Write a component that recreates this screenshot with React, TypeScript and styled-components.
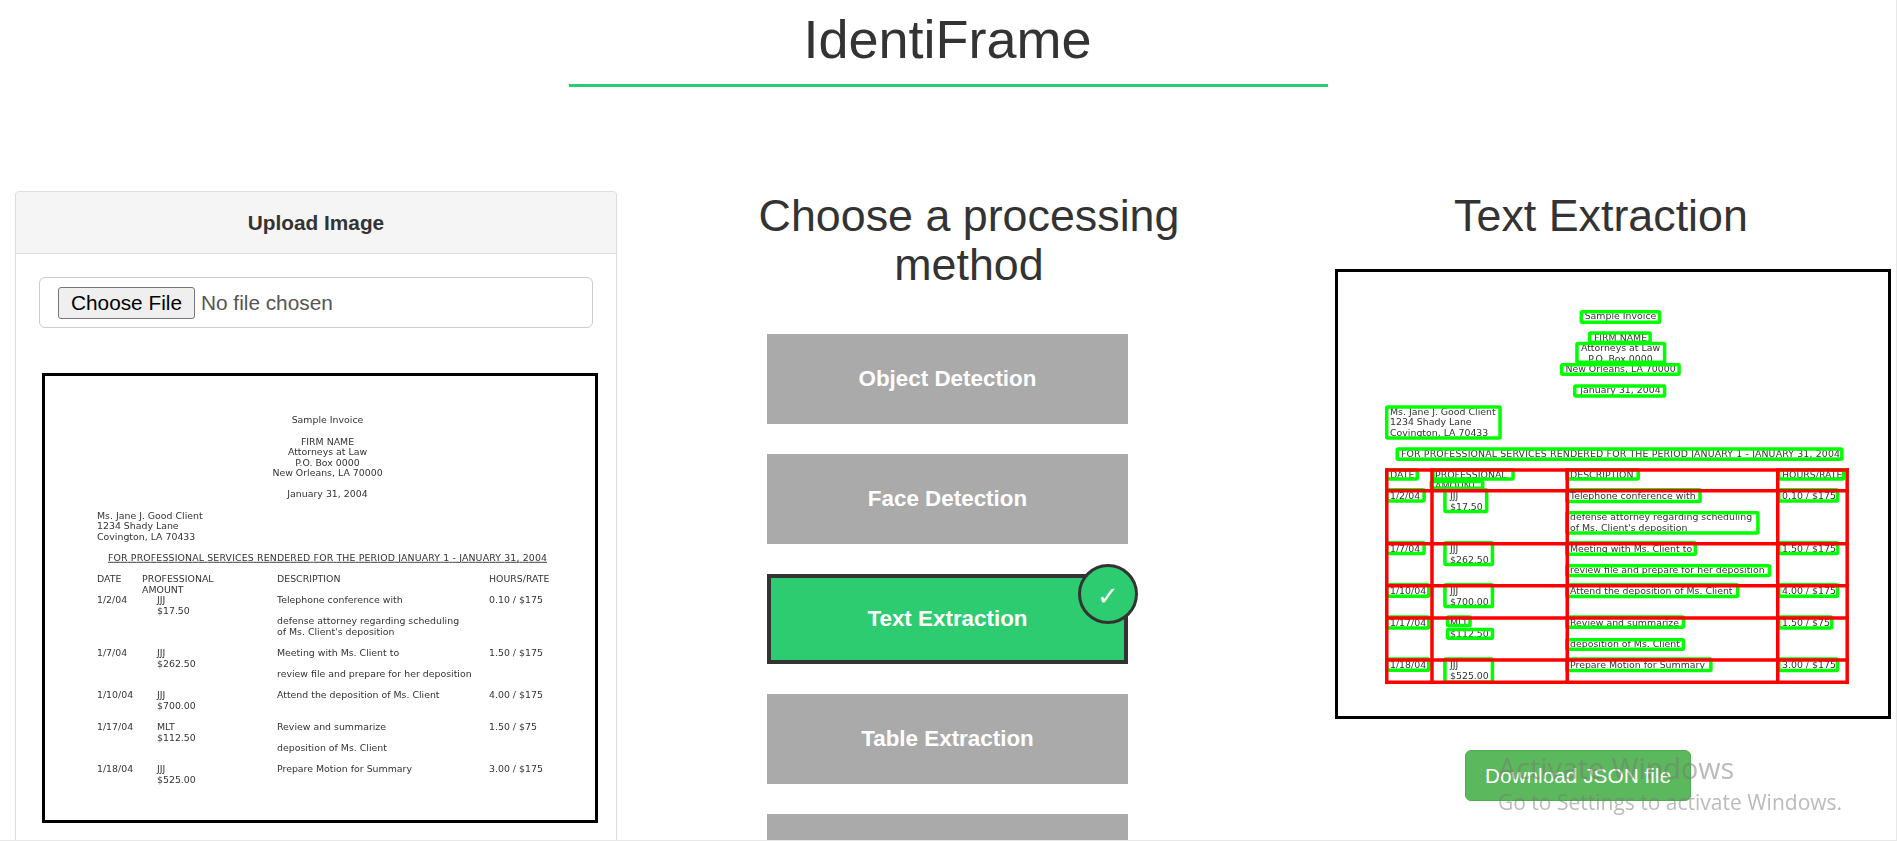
import styled, { createGlobalStyle } from 'styled-components';

const GlobalStyle = createGlobalStyle`
  html, body {
    margin: 0;
    padding: 0;
    background: #fff;
    overflow: hidden;
    font-family: "Liberation Sans", Arial, sans-serif;
    color: #333;
  }
`;

const Header = styled.header`
  padding-top: 8px;
  text-align: center;
`;

const Title = styled.h1`
  margin: 0;
  padding-right: 2px;
  font-size: 54px;
  line-height: 62px;
  font-weight: 400;
`;

const TitleRule = styled.div`
  width: 759px;
  height: 3px;
  margin: 14px auto 0;
  background: #2ecc71;
`;

const Columns = styled.main`
  display: grid;
  grid-template-columns: 632px 703px 1fr;
  margin-top: 104px;
`;

const LeftColumn = styled.section`
  padding: 0 15px;
`;

const Panel = styled.div`
  border: 1px solid #ddd;
  border-radius: 4px;
  background: #fff;
`;

const PanelHeading = styled.div`
  height: 61px;
  display: flex;
  align-items: center;
  justify-content: center;
  background: #f5f5f5;
  border-bottom: 1px solid #ddd;
  border-radius: 3px 3px 0 0;
  font-size: 20.8px;
  font-weight: 700;
`;

const PanelBody = styled.div`
  padding: 23px 18px 20px 23px;
`;

const FileField = styled.input`
  display: block;
  box-sizing: border-box;
  width: 554px;
  height: 51px;
  padding: 9px 18px;
  border: 1px solid #ccc;
  border-radius: 6px;
  background: #fff;
  font-family: "Liberation Sans", Arial, sans-serif;
  font-size: 20.8px;
  color: #555;

  &::file-selector-button {
    box-sizing: border-box;
    width: 137px;
    height: 32px;
    margin-right: 6px;
    padding: 0;
    border: 1px solid #767676;
    border-radius: 3px;
    background: #efefef;
    color: #000;
    font: inherit;
  }
`;

const Sheet = styled.div`
  box-sizing: border-box;
  width: 556px;
  height: 450px;
  border: 3px solid #000;
  background: #fff;
  overflow: hidden;
`;

const UploadSheet = styled(Sheet)`
  margin: 45px 0 0 3px;
`;

const MiddleColumn = styled.section`
  display: flex;
  flex-direction: column;
`;

const ColumnTitle = styled.h2`
  margin: 0;
  font-size: 44.8px;
  line-height: 49px;
  font-weight: 400;
  text-align: center;
`;

const MethodTitle = styled(ColumnTitle)`
  width: 500px;
  margin-left: 87px;
`;

const MethodList = styled.div`
  display: flex;
  flex-direction: column;
  gap: 30px;
  width: 361px;
  margin: 45px 0 0 135px;
`;

const MethodButton = styled.button<{ $active?: boolean }>`
  position: relative;
  flex: none;
  box-sizing: border-box;
  width: 100%;
  height: 90px;
  padding: 0;
  border: ${(p) => (p.$active ? '4px solid #333' : 'none')};
  background: ${(p) => (p.$active ? '#2ecc71' : '#aaa')};
  color: #fff;
  font-family: "Liberation Sans", Arial, sans-serif;
  font-size: 22.4px;
  font-weight: 700;
`;

const CheckBadge = styled.span`
  position: absolute;
  top: -14px;
  right: -14px;
  box-sizing: border-box;
  width: 60px;
  height: 60px;
  padding-top: 3px;
  display: flex;
  align-items: center;
  justify-content: center;
  border: 3px solid #333;
  border-radius: 50%;
  background: #2ecc71;
  font-family: "DejaVu Sans", sans-serif;
  font-size: 26px;
  font-weight: 400;
`;

const RightColumn = styled.section`
  display: flex;
  flex-direction: column;
  align-items: flex-start;
`;

const ResultTitle = styled(ColumnTitle)`
  width: 532px;
  padding-bottom: 29px;
`;

const DownloadButton = styled.button`
  width: 226px;
  height: 51px;
  margin: 31px 0 0 130px;
  border: 1px solid #4cae4c;
  border-radius: 6px;
  background: #5cb85c;
  color: #fff;
  font-family: "Liberation Sans", Arial, sans-serif;
  font-size: 20.8px;
`;

const Watermark = styled.div`
  position: fixed;
  left: 1498px;
  top: 750px;
  font-family: "Open Sans", "Noto Sans", sans-serif;
  color: rgba(120, 120, 120, 0.5);
  pointer-events: none;
`;

const WatermarkTitle = styled.div`
  font-size: 28.8px;
  line-height: 36px;
`;

const WatermarkText = styled.div`
  font-size: 21px;
  line-height: 32px;
`;

const PageEdge = styled.div`
  position: fixed;
  inset: 0;
  border-right: 1px solid #e8e8e8;
  border-bottom: 1px solid #e8e8e8;
  pointer-events: none;
`;

const DocText = styled.text`
  font-family: "DejaVu Sans", sans-serif;
  font-size: 9.4px;
  fill: #333;
`;

type Line = [number, number, string];

const ROW = (n: number) => 50.4 + 10.57 * n;
const CX = 285.5;

// columns of the scanned invoice, measured from the sheet edge
const C1 = 55;
const C2 = 100;
const C3 = 115;
const C4 = 235;
const C5 = 447;

const centered: [number, string][] = [
  [0, 'Sample Invoice'],
  [2, 'FIRM NAME'],
  [3, 'Attorneys at Law'],
  [4, 'P.O. Box 0000'],
  [5, 'New Orleans, LA 70000'],
  [7, 'January 31, 2004'],
];

const lines: Line[] = [
  [C1, 9, 'Ms. Jane J. Good Client'],
  [C1, 10, '1234 Shady Lane'],
  [C1, 11, 'Covington, LA 70433'],
  [C1, 15, 'DATE'],
  [C2, 15, 'PROFESSIONAL'],
  [C4, 15, 'DESCRIPTION'],
  [C5, 15, 'HOURS/RATE'],
  [C2, 16, 'AMOUNT'],
  [C1, 17, '1/2/04'],
  [C3, 17, 'JJJ'],
  [C4, 17, 'Telephone conference with'],
  [C5, 17, '0.10 / $175'],
  [C3, 18, '$17.50'],
  [C4, 19, 'defense attorney regarding scheduling'],
  [C4, 20, "of Ms. Client's deposition"],
  [C1, 22, '1/7/04'],
  [C3, 22, 'JJJ'],
  [C4, 22, 'Meeting with Ms. Client to'],
  [C5, 22, '1.50 / $175'],
  [C3, 23, '$262.50'],
  [C4, 24, 'review file and prepare for her deposition'],
  [C1, 26, '1/10/04'],
  [C3, 26, 'JJJ'],
  [C4, 26, 'Attend the deposition of Ms. Client'],
  [C5, 26, '4.00 / $175'],
  [C3, 27, '$700.00'],
  [C1, 29, '1/17/04'],
  [C3, 29, 'MLT'],
  [C4, 29, 'Review and summarize'],
  [C5, 29, '1.50 / $75'],
  [C3, 30, '$112.50'],
  [C4, 31, 'deposition of Ms. Client'],
  [C1, 33, '1/18/04'],
  [C3, 33, 'JJJ'],
  [C4, 33, 'Prepare Motion for Summary'],
  [C5, 33, '3.00 / $175'],
  [C3, 34, '$525.00'],
];

// detected boxes: x1, x2, y1, y2 in zoomed px of the reference
const top = (y: number) => y / 3 - 5;
const bottom = (y: number) => y / 3 + 195;
const gx = (x: number) => x / 2.765 - 5;

const boxes: [number, number, number, number][] = [
  [690, 916, top(138), top(180)],
  [713, 890, top(202), top(240)],
  [678, 930, top(233), top(300)],
  [636, 970, top(297), top(336)],
  [672, 930, top(361), top(401)],
  [152, 475, top(424), top(527)],
  [181, 1420, top(550), top(591)],
  [152, 246, bottom(12), bottom(50)],
  [280, 511, bottom(12), bottom(50)],
  [275, 427, bottom(47), bottom(78)],
  [650, 857, bottom(12), bottom(50)],
  [1236, 1425, bottom(12), bottom(50)],
  [152, 265, bottom(72), bottom(116)],
  [313, 438, bottom(72), bottom(148)],
  [650, 1028, bottom(72), bottom(118)],
  [1236, 1408, bottom(72), bottom(116)],
  [650, 1188, bottom(141), bottom(212)],
  [885, 930, bottom(172), bottom(180)],
  [152, 265, bottom(231), bottom(274)],
  [313, 454, bottom(231), bottom(307)],
  [650, 1015, bottom(231), bottom(276)],
  [1236, 1408, bottom(231), bottom(274)],
  [650, 1220, bottom(300), bottom(340)],
  [152, 278, bottom(357), bottom(402)],
  [313, 454, bottom(357), bottom(433)],
  [650, 1132, bottom(357), bottom(403)],
  [1236, 1408, bottom(357), bottom(402)],
  [152, 278, bottom(454), bottom(497)],
  [320, 392, bottom(454), bottom(490)],
  [320, 454, bottom(491), bottom(528)],
  [650, 982, bottom(454), bottom(495)],
  [650, 982, bottom(522), bottom(561)],
  [1236, 1392, bottom(454), bottom(497)],
  [152, 278, bottom(580), bottom(624)],
  [313, 454, bottom(580), bottom(660)],
  [650, 1058, bottom(580), bottom(625)],
  [1236, 1408, bottom(580), bottom(625)],
];

const gridX = [157, 282, 656, 1238, 1430].map(gx);
const gridY = [18, 80, 239, 365, 462, 588, 655].map(bottom);

const Invoice = ({ marked }: { marked?: boolean }) => (
  <svg width="550" height="444" viewBox="3 3 550 444" style={{ display: 'block' }}>
    <defs>
      <filter id="soft" x="0" y="0" width="100%" height="100%">
        <feGaussianBlur stdDeviation="0.4" />
      </filter>
    </defs>
    <g filter="url(#soft)">
      {centered.map(([n, t]) => (
        <DocText key={t} x={CX} y={ROW(n)} textAnchor="middle">{t}</DocText>
      ))}
      {lines.map(([x, n, t]) => (
        <DocText key={`${x}-${n}`} x={x} y={ROW(n)}>{t}</DocText>
      ))}
      <DocText x={CX} y={ROW(13)} textAnchor="middle" textLength="439" textDecoration="underline">
        FOR PROFESSIONAL SERVICES RENDERED FOR THE PERIOD JANUARY 1 - JANUARY 31, 2004
      </DocText>
    </g>
    {marked && (
      <>
        {boxes.map(([x1, x2, y1, y2], i) => (
          <rect
            key={i}
            x={gx(x1) + 1.75}
            y={y1 + 1.75}
            width={gx(x2) - gx(x1) - 3.5}
            height={y2 - y1 - 3.5}
            rx="1"
            fill="none"
            stroke="#00ff00"
            strokeWidth="3.5"
          />
        ))}
        {gridX.map((x) => (
          <line key={x} x1={x} x2={x} y1={gridY[0] - 1.75} y2={gridY[6] + 1.75} stroke="#ff0000" strokeWidth="3.5" />
        ))}
        {gridY.map((y) => (
          <line key={y} x1={gridX[0] - 1.75} x2={gridX[4] + 1.75} y1={y} y2={y} stroke="#ff0000" strokeWidth="3.5" />
        ))}
      </>
    )}
  </svg>
);

const App = () => (
  <>
    <GlobalStyle />
    <Header>
      <Title>IdentiFrame</Title>
      <TitleRule />
    </Header>
    <Columns>
      <LeftColumn>
        <Panel>
          <PanelHeading>Upload Image</PanelHeading>
          <PanelBody>
            <FileField type="file" />
            <UploadSheet>
              <Invoice />
            </UploadSheet>
          </PanelBody>
        </Panel>
      </LeftColumn>
      <MiddleColumn>
        <MethodTitle>Choose a processing method</MethodTitle>
        <MethodList>
          <MethodButton>Object Detection</MethodButton>
          <MethodButton>Face Detection</MethodButton>
          <MethodButton $active>
            Text Extraction
            <CheckBadge>✓</CheckBadge>
          </MethodButton>
          <MethodButton>Table Extraction</MethodButton>
          <MethodButton />
        </MethodList>
      </MiddleColumn>
      <RightColumn>
        <ResultTitle>Text Extraction</ResultTitle>
        <Sheet>
          <Invoice marked />
        </Sheet>
        <DownloadButton>Download JSON file</DownloadButton>
      </RightColumn>
    </Columns>
    <Watermark>
      <WatermarkTitle>Activate Windows</WatermarkTitle>
      <WatermarkText>Go to Settings to activate Windows.</WatermarkText>
    </Watermark>
    <PageEdge />
  </>
);

export default App;
